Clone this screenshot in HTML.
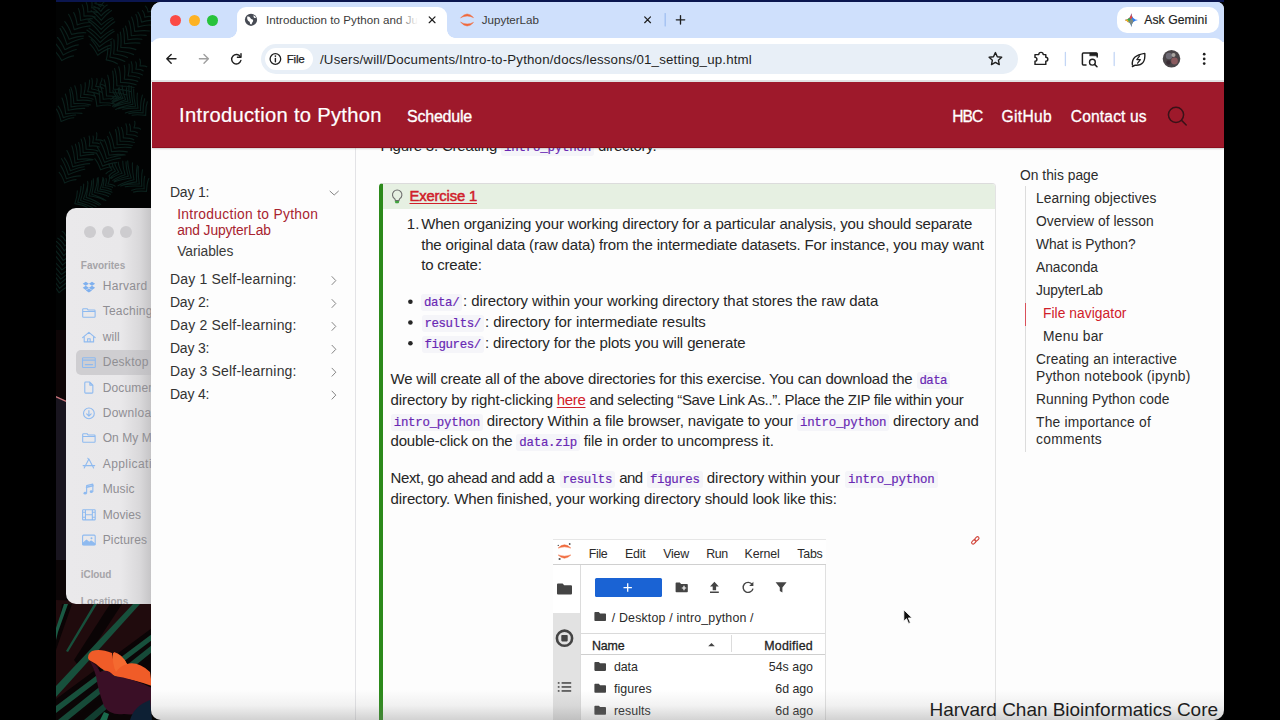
<!DOCTYPE html>
<html lang="en"><head><meta charset="utf-8"><title>Introduction to Python and JupyterLab</title>
<style>
html,body{margin:0;padding:0;}
body{width:1280px;height:720px;position:relative;overflow:hidden;background:#000;font-family:"Liberation Sans",sans-serif;}
.t{position:absolute;white-space:nowrap;}
.a{position:absolute;}
.c{font-family:"Liberation Mono",monospace;font-size:12.4px;color:#6928b4;-webkit-text-stroke:0.2px #6928b4;background:#f5f5f9;padding:1.5px 3px;position:relative;top:-0.9px;border-radius:3px;}
svg{position:absolute;overflow:visible;}

</style></head><body>
<!-- desktop wallpaper -->
<div class="a" id="wall" style="left:56px;top:0;width:1168px;height:720px;background:#020303;overflow:hidden;">
  <svg width="1168" height="720" viewBox="56 0 1168 720" style="left:0;top:0">
    <path d="M61.8 60.6Q57.8 53.6 54.0 50.5M61.8 60.6Q68.6 56.5 73.6 55.9M63.2 55.1Q59.2 47.1 55.2 43.3M63.2 55.1Q70.8 50.6 76.3 49.5M64.9 49.7Q61.3 41.6 57.5 37.5M64.9 49.7Q72.8 45.6 78.3 44.9M66.9 44.4Q63.6 34.2 60.0 28.4M66.9 44.4Q76.4 39.7 83.2 38.3M69.1 39.3Q65.8 30.9 62.0 26.4M69.1 39.3Q77.6 36.2 83.4 36.1M71.5 34.4Q68.5 26.1 64.8 21.7M71.5 34.4Q80.1 32.2 85.8 32.8M74.2 29.6Q71.9 19.9 68.6 14.3M74.2 29.6Q83.8 26.3 90.1 25.9M77.2 24.9Q76.1 16.9 73.7 12.6M77.2 24.9Q85.0 22.4 89.8 22.5M80.5 20.5Q80.3 12.7 78.4 8.5M80.5 20.5Q88.0 18.3 92.5 18.7M84.0 16.1Q84.0 8.8 82.2 4.8M84.0 16.1Q91.2 15.5 95.3 17.0M87.7 11.9Q88.0 5.6 86.3 2.4M87.7 11.9Q94.0 11.1 97.4 12.5M91.7 7.9Q92.6 2.5 91.3 0.0M91.7 7.9Q97.1 7.1 99.6 8.4M96.0 4.0Q96.6 -1.3 95.1 -3.8M96.0 4.0Q101.3 4.0 103.7 5.8M97.7 55.2Q93.8 47.6 90.0 44.1M97.7 55.2Q104.5 50.0 109.5 48.4M98.6 51.0Q94.8 43.3 91.1 39.7M98.6 51.0Q105.7 46.3 110.9 45.1M99.4 46.8Q93.8 39.4 88.8 36.1M99.4 46.8Q106.7 40.9 112.2 38.8M100.1 42.5Q93.0 34.2 86.9 30.1M100.1 42.5Q108.1 34.8 114.2 31.3M100.6 38.2Q94.4 31.2 89.0 28.2M100.6 38.2Q107.6 31.9 113.1 29.5M100.9 33.8Q94.0 25.1 88.1 20.8M100.9 33.8Q108.7 25.7 114.8 21.8M101.2 29.4Q94.3 22.3 88.6 19.2M101.2 29.4Q108.0 22.1 113.5 18.9M101.3 24.9Q96.1 18.5 91.7 16.0M101.3 24.9Q107.3 19.4 112.2 17.7M101.3 20.4Q95.7 13.6 91.1 10.7M101.3 20.4Q106.9 13.5 111.5 10.6M101.2 15.9Q96.9 10.5 93.6 8.9M101.2 15.9Q105.5 10.8 109.2 9.4M100.9 11.3Q96.8 7.0 93.7 6.2M100.9 11.3Q104.3 6.4 107.2 5.1M100.5 6.7Q97.1 3.2 94.6 3.0M100.5 6.7Q102.8 2.2 105.0 1.3M100.0 2.0Q96.7 -1.9 94.3 -2.4M100.0 2.0Q102.5 -2.4 104.8 -3.4M106.2 59.9Q108.2 52.5 107.6 48.0M106.2 59.9Q113.6 61.2 117.4 63.9M109.9 57.1Q111.7 47.6 111.0 41.6M109.9 57.1Q119.3 58.5 124.8 61.4M113.6 54.0Q114.8 45.2 113.8 39.7M113.6 54.0Q122.4 54.9 127.5 57.4M117.2 50.8Q118.6 40.6 117.8 34.0M117.2 50.8Q127.3 51.9 133.6 54.6M120.8 47.4Q121.6 37.9 120.3 32.1M120.8 47.4Q130.2 47.5 135.9 49.6M124.4 43.7Q124.7 34.1 123.1 28.2M124.4 43.7Q133.9 42.3 139.9 43.1M127.9 39.8Q127.5 31.1 125.5 26.0M127.9 39.8Q136.6 38.4 141.9 39.3M131.3 35.7Q131.0 26.4 128.9 20.9M131.3 35.7Q140.5 34.4 146.3 35.4M134.7 31.4Q133.9 22.3 131.6 17.0M134.7 31.4Q143.8 30.0 149.5 31.0M138.1 26.9Q137.8 18.8 135.9 14.5M138.1 26.9Q145.9 24.7 150.6 25.1M141.5 22.1Q140.4 15.4 137.9 12.1M141.5 22.1Q148.1 20.0 151.9 20.5M144.8 17.2Q144.3 12.3 142.4 10.6M144.8 17.2Q149.4 15.8 151.7 16.9M148.0 12.0Q147.3 7.5 145.4 6.1M148.0 12.0Q152.3 10.5 154.4 11.6M61.1 121.5Q59.2 113.3 56.4 109.1M61.1 121.5Q68.8 118.0 73.8 117.7M63.3 117.6Q61.2 110.0 58.1 106.1M63.3 117.6Q70.9 114.9 75.7 115.0M65.7 113.9Q64.5 103.9 62.0 98.0M65.7 113.9Q75.5 112.4 82.0 113.4M68.2 110.3Q67.5 100.2 65.3 94.0M68.2 110.3Q78.2 108.1 84.7 108.4M71.0 106.9Q71.2 96.2 69.6 89.6M71.0 106.9Q81.5 105.2 88.4 106.0M73.9 103.6Q73.2 93.6 70.8 87.4M73.9 103.6Q84.0 103.2 90.4 104.9M77.1 100.4Q76.9 91.3 74.8 85.8M77.1 100.4Q86.3 99.7 91.9 101.0M80.4 97.3Q81.8 89.3 80.8 84.5M80.4 97.3Q88.5 97.4 93.1 99.2M83.9 94.4Q85.8 87.1 85.1 82.7M83.9 94.4Q91.5 94.6 95.5 96.5M87.7 91.6Q89.9 84.4 89.5 80.0M87.7 91.6Q95.2 92.2 99.1 94.2M91.6 89.0Q93.0 82.3 91.8 78.4M91.6 89.0Q98.3 90.0 101.6 92.4M95.7 86.4Q97.6 81.3 96.9 78.6M95.7 86.4Q101.2 86.8 103.3 88.5M100.0 84.0Q102.4 80.1 101.9 78.2M100.0 84.0Q104.3 84.8 105.5 86.8M96.9 106.3Q96.1 97.9 93.6 93.1M96.9 106.3Q105.3 104.6 110.4 105.2M100.0 102.8Q100.0 93.6 98.1 88.1M100.0 102.8Q109.2 102.4 114.8 104.1M103.2 99.3Q102.5 90.3 100.0 84.9M103.2 99.3Q112.4 98.0 118.0 98.9M106.5 95.9Q106.2 85.9 104.1 79.7M106.5 95.9Q116.5 96.3 122.7 98.5M109.9 92.5Q109.7 81.9 107.7 75.2M109.9 92.5Q120.5 92.9 127.2 95.1M113.4 89.1Q114.1 78.2 112.7 71.1M113.4 89.1Q124.3 89.5 131.2 91.7M116.9 85.7Q116.8 75.3 114.6 68.6M116.9 85.7Q127.5 85.7 134.1 87.5M120.5 82.4Q120.7 72.8 118.7 66.8M120.5 82.4Q130.2 82.7 136.1 84.8M124.3 79.1Q125.4 70.6 124.3 65.4M124.3 79.1Q132.8 79.3 137.7 81.4M128.1 75.8Q129.7 68.3 129.0 64.0M128.1 75.8Q135.6 76.1 139.7 78.1M132.0 72.5Q132.7 65.6 131.2 61.7M132.0 72.5Q138.9 72.9 142.5 74.9M135.9 69.2Q137.0 64.3 135.7 61.9M135.9 69.2Q141.1 69.1 143.1 70.8M140.0 66.0Q141.0 61.3 139.7 59.1M140.0 66.0Q144.9 65.5 146.8 66.8M145.7 115.4Q137.1 114.2 132.0 115.2M145.7 115.4Q145.5 106.9 147.3 101.8M143.1 112.9Q134.2 112.2 128.8 113.6M143.1 112.9Q142.9 104.0 144.7 98.7M140.5 110.5Q131.0 110.9 125.3 113.0M140.5 110.5Q140.5 101.0 142.4 95.1M138.0 108.2Q128.5 107.9 122.8 109.3M138.0 108.2Q136.5 98.9 137.4 93.1M135.5 106.2Q124.9 106.7 118.4 108.7M135.5 106.2Q133.3 95.9 133.7 89.1M133.0 104.3Q122.2 106.2 115.7 109.4M133.0 104.3Q130.9 93.6 131.4 86.4M130.5 102.6Q120.0 104.2 113.8 107.0M130.5 102.6Q128.4 92.3 129.0 85.4M128.0 101.1Q119.7 102.7 115.2 105.4M128.0 101.1Q126.0 92.9 126.6 87.7M125.6 99.7Q117.1 102.7 112.5 106.3M125.6 99.7Q122.3 91.2 122.1 85.5M123.1 98.5Q115.8 100.5 112.3 103.2M123.1 98.5Q119.6 91.8 119.2 87.5M120.7 97.5Q114.9 99.8 112.7 102.7M120.7 97.5Q118.0 91.9 118.3 88.2M118.4 96.7Q113.5 98.9 112.0 101.5M118.4 96.7Q115.1 92.2 115.0 89.4M116.0 96.0Q111.7 97.7 110.8 99.7M116.0 96.0Q112.9 92.6 112.9 90.4M64.6 182.9Q62.2 175.7 59.2 172.3M64.6 182.9Q71.5 179.7 76.1 179.6M66.4 178.8Q63.9 170.2 60.7 165.6M66.4 178.8Q74.7 175.8 80.4 175.9M68.3 174.7Q65.3 164.5 61.6 158.7M68.3 174.7Q78.1 170.3 84.8 169.2M70.4 170.8Q67.8 162.4 64.3 157.9M70.4 170.8Q78.7 167.2 84.1 166.7M72.7 166.9Q70.3 156.6 66.9 150.5M72.7 166.9Q82.8 163.8 89.7 163.6M75.0 163.2Q74.1 152.4 71.9 145.9M75.0 163.2Q85.4 160.2 92.3 160.0M77.6 159.5Q77.3 149.9 75.4 144.2M77.6 159.5Q87.0 158.3 93.1 159.6M80.3 156.0Q80.3 147.4 78.6 142.5M80.3 156.0Q88.7 153.9 93.8 154.4M83.1 152.6Q83.0 144.0 81.1 139.1M83.1 152.6Q91.6 151.8 96.8 153.2M86.1 149.3Q86.0 141.7 84.0 137.5M86.1 149.3Q93.7 149.2 98.0 151.1M89.3 146.1Q90.3 139.5 89.1 136.0M89.3 146.1Q95.8 145.5 99.3 147.0M92.6 143.0Q93.9 138.2 93.0 136.1M92.6 143.0Q97.4 142.5 99.4 143.9M96.0 140.0Q97.4 135.0 96.5 132.7M96.0 140.0Q101.2 139.6 103.3 141.0M100.6 169.8Q98.1 162.4 94.9 158.8M100.6 169.8Q107.9 166.7 112.6 166.7M102.5 166.1Q99.6 157.4 96.1 152.8M102.5 166.1Q111.1 162.8 116.8 162.6M104.5 162.4Q101.3 152.8 97.4 147.3M104.5 162.4Q114.1 158.7 120.5 158.1M106.6 158.8Q104.0 148.2 100.3 141.9M106.6 158.8Q117.1 155.4 124.2 154.9M109.0 155.2Q107.2 145.4 104.2 139.6M109.0 155.2Q118.8 153.8 125.3 155.0M111.5 151.6Q110.3 142.0 107.6 136.4M111.5 151.6Q121.1 150.6 127.3 151.9M114.2 148.1Q112.5 138.1 109.4 132.0M114.2 148.1Q124.4 146.7 131.1 147.6M117.1 144.7Q117.2 135.2 115.5 129.5M117.1 144.7Q126.4 144.0 132.3 145.5M120.1 141.3Q119.9 132.4 117.9 127.1M120.1 141.3Q129.0 140.9 134.4 142.5M123.3 137.9Q123.3 131.0 121.4 127.4M123.3 137.9Q130.2 137.8 133.8 139.8M126.7 134.5Q127.4 127.6 125.9 123.8M126.7 134.5Q133.6 134.5 137.3 136.4M130.3 131.2Q130.9 126.3 129.4 124.1M130.3 131.2Q135.3 131.1 137.3 132.8M134.0 128.0Q135.5 123.4 134.6 121.3M134.0 128.0Q138.8 127.6 140.6 129.1M146.5 191.4Q138.4 190.6 133.5 192.1M146.5 191.4Q146.8 183.2 148.8 178.5M144.2 188.8Q136.3 188.5 131.7 190.2M144.2 188.8Q143.5 180.7 144.7 176.2M141.8 186.3Q131.6 185.6 125.2 186.8M141.8 186.3Q141.1 176.1 142.5 169.7M139.3 184.0Q128.7 183.8 122.0 185.4M139.3 184.0Q137.7 173.5 138.4 166.6M136.7 181.9Q126.7 183.2 120.7 186.0M136.7 181.9Q135.9 171.8 137.3 165.3M134.0 179.8Q124.0 182.3 118.0 185.8M134.0 179.8Q131.9 169.6 132.5 162.8M131.2 178.0Q120.6 179.4 114.2 182.0M131.2 178.0Q128.0 167.8 127.7 160.9M128.3 176.3Q119.3 178.2 114.3 181.0M128.3 176.3Q125.7 167.5 126.1 161.7M125.2 174.7Q117.0 177.2 112.8 180.4M125.2 174.7Q122.5 166.7 122.8 161.2M122.1 173.3Q114.9 175.5 111.5 178.3M122.1 173.3Q118.6 166.6 118.3 162.2M118.8 172.1Q112.7 174.9 110.3 178.1M118.8 172.1Q115.1 166.3 114.6 162.5M115.5 171.0Q110.5 173.4 109.0 176.1M115.5 171.0Q112.3 166.3 112.3 163.4M112.0 170.0Q107.2 171.7 106.0 173.8M112.0 170.0Q108.9 166.1 108.9 163.6M74.8 203.6Q77.5 195.9 77.3 190.9M74.8 203.6Q82.9 204.9 87.1 207.3M77.7 202.1Q80.8 192.7 81.0 186.3M77.7 202.1Q87.3 204.5 92.7 207.8M80.5 200.5Q83.6 190.8 83.7 184.1M80.5 200.5Q90.4 203.2 96.0 206.6M83.4 199.0Q87.3 189.3 88.1 182.7M83.4 199.0Q93.4 201.7 99.2 205.2M86.2 197.4Q88.3 187.8 87.6 181.3M86.2 197.4Q95.5 200.5 100.7 204.4M89.0 195.8Q91.8 186.7 91.7 180.7M89.0 195.8Q98.4 197.3 103.8 199.9M91.8 194.2Q93.9 185.0 93.3 178.8M91.8 194.2Q100.8 196.9 105.8 200.5M94.5 192.5Q97.4 183.9 97.3 178.3M94.5 192.5Q103.5 193.9 108.6 196.4M97.3 190.9Q99.0 182.6 98.1 177.3M97.3 190.9Q105.8 191.9 110.5 194.2M100.0 189.2Q102.9 181.8 102.9 177.2M100.0 189.2Q107.8 190.1 112.0 192.2M102.7 187.5Q104.4 181.8 103.5 178.6M102.7 187.5Q108.7 188.0 111.3 189.8M105.3 185.7Q107.0 180.9 106.0 178.5M105.3 185.7Q110.5 185.8 112.5 187.3M108.0 184.0Q110.0 179.2 109.4 176.7M108.0 184.0Q113.1 184.3 115.1 186.1M59.0 292.7Q55.0 286.1 51.4 283.4M59.0 292.7Q64.8 287.7 69.2 286.3M59.5 288.3Q54.6 280.9 50.3 277.6M59.5 288.3Q66.2 282.5 71.3 280.4M60.1 283.7Q55.0 275.5 50.4 271.5M60.1 283.7Q67.2 277.2 72.7 274.5M60.7 279.1Q54.5 271.1 49.0 267.2M60.7 279.1Q68.7 272.7 74.9 270.2M61.3 274.5Q54.6 265.9 48.8 261.6M61.3 274.5Q70.2 268.3 77.1 265.9M61.9 269.9Q56.1 262.5 51.0 259.3M61.9 269.9Q69.4 264.3 75.2 262.5M62.5 265.1Q56.5 256.4 51.2 252.0M62.5 265.1Q70.4 258.2 76.6 255.2M63.1 260.4Q57.6 252.0 52.7 247.9M63.1 260.4Q71.2 254.9 77.5 253.0M63.7 255.6Q58.8 247.9 54.6 244.2M63.7 255.6Q70.3 249.4 75.4 247.0M64.2 250.8Q60.1 244.2 56.4 241.5M64.2 250.8Q69.7 245.2 73.9 243.3M64.8 245.9Q61.2 240.2 57.8 238.2M64.8 245.9Q70.0 241.6 73.9 240.7M65.4 241.0Q63.1 236.7 60.8 235.9M65.4 241.0Q68.8 237.5 71.3 237.4M66.0 236.0Q64.0 231.9 62.1 231.3M66.0 236.0Q69.1 232.8 71.2 232.8" stroke="#0b201c" stroke-width="1.15" fill="none" stroke-linecap="round"/>
    <!-- bottom art -->
    <polygon points="56,330 66,330 66,400 56,396" fill="#0d0506"/>
    <polygon points="56,396.500 66,401 66,600 152,604 152,720 56,720" fill="#19151f"/>
    <polygon points="56,396 66,400.500 66,402 56,397.500" fill="#c9767c"/>
    <polygon points="56,560 66,560 66,600 152,604 152,720 56,720" fill="#0b0506"/>
    <polygon points="56,600 152,604 152,640 120,660 56,712" fill="#200b0d"/>
    <polygon points="56,640 62,604 72,604 56,650" fill="#0a0405"/>
    <polygon points="56,628 64,604 68,604 58,632 56,640" fill="#1a5a44"/>
    <polygon points="66,651 94,604 97,604 68,652" fill="#17503c"/>
    <polygon points="74,660 110,604 122,604 80,668" fill="#0a0405"/>
    <polygon points="56,686 133,604 140,604 56,697" fill="#17503c"/>
    <polygon points="56,699 152,628 152,634 56,706" fill="#0a0405"/>
    <polygon points="56,706 152,634 152,640 56,713" fill="#17503c"/>
    <polygon points="58,720 152,645 152,652 68,720" fill="#164a38"/>
    <polygon points="72,720 152,656 152,660 80,720" fill="#0a0405"/>
    <polygon points="84,720 120,690 126,692 94,720" fill="#123d30"/>
    <path d="M89 660 Q86 655 92 651 Q100 648 112 653 L113 662 Q112 655 114 652 Q122 654 127 664 Q138 661 150 672 L152 686 Q136 680 120 678 Q104 672 96 664 Z" fill="#f05c28"/>
    <path d="M113 653 Q122 654 127 664 Q120 666 116 672 Q112 664 113 653Z" fill="#f46a30"/>
    <path d="M90 661 Q98 666 100 672 Q108 668 114 676 Q132 678 152 688 L152 708 Q140 716 124 714 Q110 716 104 706 Q98 690 96 676 Q94 668 90 661Z" fill="#3a0f26"/>
    <path d="M130 720 Q134 706 150 700 L152 720Z" fill="#0d2034"/>
    <path d="M100 720 L104 712 L109 714 L107 720Z" fill="#1a6a4c"/>
  </svg>
</div>
<div class="a" style="left:56px;top:0;width:1168px;height:1.7px;background:#0b164f;"></div>

<!-- Finder window -->
<div class="a" id="finder" style="left:66px;top:208px;width:120px;height:396px;background:linear-gradient(to right,#eae9eb 0,#e9e8ea 55px,#d9d8da 74px,#c4c3c5 86px);border-radius:10px;overflow:hidden;">
  <div class="a" style="left:17.5px;top:18px;width:12px;height:12px;border-radius:50%;background:#cdcccf;"></div>
  <div class="a" style="left:35.5px;top:18px;width:12px;height:12px;border-radius:50%;background:#cdcccf;"></div>
  <div class="a" style="left:53.5px;top:18px;width:12px;height:12px;border-radius:50%;background:#cdcccf;"></div>
  <div class="a" style="left:9.5px;top:141.5px;width:100px;height:25px;border-radius:5px;background:linear-gradient(to right,#cfced1 0,#cfced1 50px,#bebdc0 78px);"></div>
  <svg width="120" height="396" viewBox="66 208 120 396" style="left:0;top:0" fill="none" stroke="#8ebaf0" stroke-width="1.3" stroke-linejoin="round" stroke-linecap="round">
    <!-- dropbox -->
    <g transform="translate(88.9 287.20000000000005) scale(.84) translate(-88.9 -286.6)">
    <g fill="#7fb0ee" stroke="none"><path d="M85.2 280.2l-3.7 2.4 3.7 2.4 3.7-2.4zM92.6 280.2l-3.7 2.4 3.7 2.4 3.7-2.4zM81.5 287.4l3.7 2.4 3.7-2.4-3.7-2.4zM92.6 285l-3.7 2.4 3.7 2.4 3.7-2.4zM85.2 290.6l3.7 2.4 3.7-2.4-3.7-2.4z"/></g>
    </g>
    <!-- folder teaching -->
    <g transform="translate(88.9 313.0) scale(.84) translate(-88.9 -312.4)">
    <path d="M82.5 307.3h4.2l1.4 1.6h7.2a1 1 0 0 1 1 1v6.6a1 1 0 0 1-1 1h-12.8a1 1 0 0 1-1-1v-8.2a1 1 0 0 1 1-1zM81.6 310.6h14.6"/>
    </g>
    <!-- home -->
    <g transform="translate(88.9 337.20000000000005) scale(.84) translate(-88.9 -336.6)">
    <path d="M81.4 337.2l7.5-6.4 7.5 6.4M83.3 336v6.2h11.2v-6.2M87.4 342.2v-3.8h3v3.8"/>
    </g>
    <!-- desktop -->
    <g transform="translate(88.9 362.6) scale(.84) translate(-88.9 -362)">
    <path d="M82.3 356.2h13.2a1 1 0 0 1 1 1v9.6a1 1 0 0 1-1 1h-13.2a1 1 0 0 1-1-1v-9.6a1 1 0 0 1 1-1zM81.4 359h15M84.6 364.4h8.6"/>
    </g>
    <!-- document -->
    <g transform="translate(88.9 387.6) scale(.84) translate(-88.9 -387)">
    <path d="M85 380.4h5l3.6 3.6v8.6a1 1 0 0 1-1 1h-7.6a1 1 0 0 1-1-1v-11.2a1 1 0 0 1 1-1zM90 380.6v3.4h3.4"/>
    </g>
    <!-- downloads -->
    <g transform="translate(88.9 413.40000000000003) scale(.84) translate(-88.9 -412.8)">
    <circle cx="88.9" cy="412.8" r="6.4"/><path d="M88.9 409.4v6.4M86.2 413.4l2.7 2.6 2.7-2.6"/>
    </g>
    <!-- folder on my mac -->
    <g transform="translate(88.9 438.0) scale(.84) translate(-88.9 -437.4)">
    <path d="M82.5 432.3h4.2l1.4 1.6h7.2a1 1 0 0 1 1 1v6.6a1 1 0 0 1-1 1h-12.8a1 1 0 0 1-1-1v-8.2a1 1 0 0 1 1-1zM81.6 435.6h14.6"/>
    </g>
    <!-- applications -->
    <g transform="translate(88.9 463.6) scale(.84) translate(-88.9 -463)">
    <path d="M88.9 457.6l-5.6 10.6M88.9 457.6l5.6 10.6M82 465.4h13.8M87.6 456.6l1.3 1.6"/>
    </g>
    <!-- music -->
    <g transform="translate(88.9 488.8) scale(.84) translate(-88.9 -488.2)">
    <g><path d="M86.2 493.2v-8.8l7.4-1.8v8.8" /><ellipse cx="84.4" cy="493.4" rx="1.9" ry="1.6" fill="#8ebaf0" stroke="none"/><ellipse cx="91.8" cy="491.6" rx="1.9" ry="1.6" fill="#8ebaf0" stroke="none"/><path d="M86.2 486.4l7.4-1.8" stroke-width="2"/></g>
    </g>
    <!-- movies -->
    <g transform="translate(88.9 514.8000000000001) scale(.84) translate(-88.9 -514.2)">
    <path d="M82.2 508.2h13.4a.8.8 0 0 1 .8.8v10.4a.8.8 0 0 1-.8.8h-13.4a.8.8 0 0 1-.8-.8v-10.4a.8.8 0 0 1 .8-.8zM84.8 508.2v12M93 508.2v12M84.8 514.2h8.2M81.4 511.2h3.4M81.4 517.2h3.4M93 511.2h3.4M93 517.2h3.4"/>
    </g>
    <!-- pictures -->
    <g transform="translate(88.9 540.0) scale(.84) translate(-88.9 -539.4)">
    <g><rect x="81.4" y="533.6" width="15" height="11.6" rx="1.2"/><path d="M81.6 543.6l4.4-4 3.2 2.8 2.4-1.8 4.6 3.6v.8h-14.6z" fill="#8ebaf0"/><circle cx="92" cy="537.4" r="1.2" fill="#8ebaf0" stroke="none"/></g>
    </g>
  </svg>
<div class="t" style="top:51.01px;font-size:10px;line-height:14px;color:#a5a4a8;left:14.80px;font-weight:700;letter-spacing:-0.008px;">Favorites</div>
<div class="t" style="top:70.01px;font-size:12px;line-height:17px;color:#8f8e93;left:36.70px;letter-spacing:0.312px;">Harvard U</div>
<div class="t" style="top:95.02px;font-size:12px;line-height:17px;color:#8f8e93;left:36.70px;letter-spacing:0.244px;">Teaching</div>
<div class="t" style="top:121.01px;font-size:12px;line-height:17px;color:#8f8e93;left:36.70px;letter-spacing:0.082px;">will</div>
<div class="t" style="top:146.00px;font-size:12px;line-height:17px;color:#8f8e93;left:36.70px;letter-spacing:0.281px;">Desktop</div>
<div class="t" style="top:172.01px;font-size:12px;line-height:17px;color:#8f8e93;left:36.70px;letter-spacing:0.144px;">Documents</div>
<div class="t" style="top:197.01px;font-size:12px;line-height:17px;color:#8f8e93;left:36.70px;letter-spacing:0.292px;">Downloads</div>
<div class="t" style="top:222.02px;font-size:12px;line-height:17px;color:#8f8e93;left:36.70px;letter-spacing:0.073px;">On My Mac</div>
<div class="t" style="top:248.01px;font-size:12px;line-height:17px;color:#8f8e93;left:36.70px;letter-spacing:0.440px;">Applications</div>
<div class="t" style="top:273.00px;font-size:12px;line-height:17px;color:#8f8e93;left:36.70px;letter-spacing:0.131px;">Music</div>
<div class="t" style="top:299.01px;font-size:12px;line-height:17px;color:#8f8e93;left:36.70px;letter-spacing:0.081px;">Movies</div>
<div class="t" style="top:324.01px;font-size:12px;line-height:17px;color:#8f8e93;left:36.70px;letter-spacing:0.143px;">Pictures</div>
<div class="t" style="top:360.00px;font-size:10px;line-height:14px;color:#a5a4a8;left:14.80px;font-weight:700;letter-spacing:-0.085px;">iCloud</div>
<div class="t" style="top:387.00px;font-size:10px;line-height:14px;color:#a5a4a8;left:14.80px;font-weight:700;letter-spacing:0.030px;">Locations</div>
</div>

<!-- Chrome window -->
<div class="a" id="chrome" style="left:151px;top:2px;width:1073px;height:718px;background:#fdfdfd;border-radius:10px 7px 10px 10px;overflow:hidden;">
  <!-- tab strip -->
  <div class="a" style="left:0;top:0;width:1073px;height:40px;background:#cfe0fc;"></div>
  <!-- toolbar -->
  <div class="a" style="left:0;top:36px;width:1073px;height:43px;background:#fff;border-radius:9px 9px 0 0;"></div>
  <!-- active tab -->
  <div class="a" style="left:85.5px;top:5px;width:210px;height:34px;background:#fff;border-radius:9px 9px 0 0;"></div>
  <div class="a" style="left:77.5px;top:28px;width:8px;height:8px;background:radial-gradient(circle at 0 0, rgba(255,255,255,0) 7.5px, #fff 8px);"></div>
  <div class="a" style="left:295.5px;top:28px;width:8px;height:8px;background:radial-gradient(circle at 100% 0, rgba(255,255,255,0) 7.5px, #fff 8px);"></div>
  <!-- traffic lights -->
  <div class="a" style="left:19.4px;top:12.9px;width:11px;height:11px;border-radius:50%;background:#fb4a45;"></div>
  <div class="a" style="left:37.5px;top:12.9px;width:11px;height:11px;border-radius:50%;background:#fdb224;"></div>
  <div class="a" style="left:55.6px;top:12.9px;width:11px;height:11px;border-radius:50%;background:#27c33b;"></div>
  <!-- omnibox -->
  <div class="a" style="left:109.5px;top:42px;width:757px;height:30px;border-radius:15px;background:#e8eff7;"></div>
  <div class="a" style="left:113.5px;top:46.3px;width:48px;height:21.5px;border-radius:11px;background:#fff;"></div>
  <!-- gemini pill -->
  <div class="a" style="left:966px;top:5.2px;width:101.5px;height:25.6px;border-radius:10px;background:#fff;"></div>
  <!-- chrome icons -->
  <svg width="1073" height="80" viewBox="151 2 1073 80" style="left:0;top:0" fill="none" stroke="#1f1f1f" stroke-width="1.5" stroke-linecap="round" stroke-linejoin="round">
    <!-- globe -->
    <circle cx="251" cy="19.8" r="6.1" fill="#474b54" stroke="none"/>
    <path d="M247.2 16.6q2.2-.4 3 1.2q.6 1.6 2.4 1.8q1.2 1.2-.2 2.6l-1 2.4q-1.8-.6-1.6-2.6q-2.2-1-2.6-3zM253.6 15.2q1.6.8 2.6 2.6l-1.8.2q-1.200-.6-.8-2.800z" fill="#fff" stroke="none"/>
    <!-- tab close -->
    <path d="M644.700 16.900l5.800 5.800M650.500 16.900l-5.800 5.800" stroke="#1f1f1f" stroke-width="1.25"/>
    <!-- jupyter icon -->
    <path d="M460.900 17.600q6.200-7.400 12.600 0q-6.300-3.200-12.600 0zM460.900 22.400q6.200 7.400 12.600 0q-6.300 3.200-12.600 0z" fill="#f0683a" stroke="#f0683a" stroke-width=".5"/>
    <!-- tab separator & plus -->
    <path d="M665.200 13.500v12.500" stroke="#9dbdf0" stroke-width="1.2"/>
    <path d="M676.300 19.800h8.400M680.500 15.600v8.400" stroke-width="1.35"/>
    <!-- back / forward / reload -->
    <path d="M176 58.800h-9M171.200 54.400l-4.400 4.400 4.400 4.400" stroke-width="1.400"/>
    <path d="M199.400 58.800h9M204 54.400l4.400 4.400-4.400 4.400" stroke="#a0a0a0" stroke-width="1.400"/>
    <path d="M240.400 56.800a4.700 4.700 0 1 0 .5 3.600" stroke-width="1.400"/><path d="M241 53.600v3.600h-3.600" stroke-width="1.400"/>
    <!-- info icon -->
    <circle cx="275.400" cy="59" r="5.300" stroke-width="1.300"/><path d="M275.400 58.400v3.400" stroke-width="1.400"/><circle cx="275.400" cy="56.100" r=".85" fill="#1f1f1f" stroke="none"/>
    <!-- star -->
    <path d="M995.400 52.600l1.900 4.100 4.400.5-3.300 3 .9 4.400-3.900-2.200-3.900 2.200.9-4.400-3.300-3 4.400-.5z" stroke-width="1.400"/>
    <!-- extensions puzzle -->
    <path d="M1035 54.600h3.800a2.200 2.200 0 0 1 4.400 0h2.600v2.600a2 2 0 0 1 0 4v3.200h-10.800v-3.200a1.900 1.900 0 0 0 0-3.800z" stroke-width="1.450"/>
    <path d="M1065.400 52.500v13M1114.200 52.500v13" stroke="#c3d6f5" stroke-width="1.300"/>
    <!-- tab search -->
    <path d="M1086 65h-2.600a1 1 0 0 1-1-1v-10a1 1 0 0 1 1-1h12.800a1 1 0 0 1 1 1v3" stroke-width="1.500"/><path d="M1090 53h7v2.800h-7z" fill="#1f1f1f" stroke-width=".6"/>
    <circle cx="1092.400" cy="62.200" r="2.900" stroke-width="1.400"/><path d="M1094.600 64.400l2.400 2.400" stroke-width="1.500"/>
    <!-- leaf -->
    <path d="M1132.400 64.800q-1.200-9.400 12.400-11.400q1 12.600-9.600 11.800q-1.400.2-2.800 1.400" stroke-width="1.400"/><path d="M1139.600 55.800l-2.800 3.800h3.600l-2.800 3.600" stroke-width="1.200"/>
    <!-- avatar -->
    <circle cx="1171.500" cy="58.700" r="8.800" fill="#4a4548" stroke="none"/>
    <circle cx="1169" cy="56" r="3.200" fill="#6d6a74" stroke="none"/><circle cx="1174.500" cy="61" r="3.400" fill="#8a5a5e" stroke="none"/><circle cx="1173.500" cy="55" r="2" fill="#a9a5a0" stroke="none"/><circle cx="1168.500" cy="62.500" r="2.200" fill="#3a2c34" stroke="none"/>
    <!-- dots -->
    <g fill="#1f1f1f" stroke="none"><circle cx="1204.200" cy="54.200" r="1.350"/><circle cx="1204.200" cy="58.900" r="1.350"/><circle cx="1204.200" cy="63.600" r="1.350"/></g>
    <!-- gemini spark -->
    <path d="M1131.300 13.200q.7 6.200 6.700 6.900q-6 .7-6.700 6.900q-.7-6.200-6.700-6.900q6-.7 6.700-6.900z" fill="#2f7df2" stroke="none"/>
    <path d="M1131.300 13.200q.2 2.600 1.300 4.300l-4.600 4.800q-1.400-1.700-3.400-2.200q6-.7 6.700-6.900z" fill="#e2463f" stroke="none"/>
    <path d="M1124.600 20.100q2 .5 3.400 2.200l1.800-1.900l-2-1.500q-1.400.9-3.200 1.200z" fill="#e9b820" stroke="none"/>
    <path d="M1128 22.300l3.900-4.100l1.600 3.200q-1.800 2-2.200 5.600q-.5-4.300-3.300-4.700z" fill="#7e8a80" stroke="none"/>
    <path d="M1127.200 19.300l2.200-1.400l1.400 1.600l-1.800 1.900z" fill="#36a852" stroke="none"/>
  </svg>
<div class="t" style="top:10.01px;font-size:11.6px;line-height:16px;color:#3a3a3a;left:115.00px;letter-spacing:0.040px;">Introduction to Python and Ju</div>
<div class="t" style="top:10.01px;font-size:11.6px;line-height:16px;color:#3a3a3a;left:330.80px;letter-spacing:-0.037px;">JupyterLab</div>
<div class="t" style="top:49.00px;font-size:11.6px;line-height:16px;color:#1f1f1f;left:135.80px;letter-spacing:-0.272px;-webkit-text-stroke:0.25px #1f1f1f;">File</div>
<div class="t" style="top:48.02px;font-size:13.3px;line-height:19px;color:#1f1f1f;left:169.00px;letter-spacing:0.177px;">/Users/will/Documents/Intro-to-Python/docs/lessons/01_setting_up.html</div>
<div class="t" style="top:10.00px;font-size:12.2px;line-height:17px;color:#1f1f1f;left:993.20px;letter-spacing:0.069px;-webkit-text-stroke:0.2px #1f1f1f;">Ask Gemini</div>
  <!-- tab title fade -->
  <div class="a" style="left:246px;top:10px;width:26px;height:20px;background:linear-gradient(to right,rgba(255,255,255,0),#fff 80%);"></div>
  <svg width="20" height="20" viewBox="422 10 20 20" style="left:271px;top:8px" fill="none"><path d="M429.200 16.900l5.800 5.800M435 16.900l-5.800 5.800" stroke="#1f1f1f" stroke-width="1.25" stroke-linecap="round"/></svg>
  <!-- separator under toolbar -->
  <div class="a" style="left:0;top:78.200px;width:1073px;height:1.6px;background:#e2e2e2;"></div>
  <!-- page vertical lines -->
  <div class="a" style="left:204px;top:146px;width:1px;height:580px;background:#e3e3e6;"></div>
  <!-- callout -->
  <div class="a" style="left:227.800px;top:181px;width:617px;height:560px;border:1px solid #e3e3e3;border-top:0.5px solid #dcdcdc;border-left:4.400px solid #2c8a1b;border-radius:4px;box-sizing:border-box;background:#fdfdfd;overflow:hidden;">
     <div class="a" style="left:0;top:0;width:616px;height:24.8px;background:#e6f0e2;"></div>
  </div>
  <!-- page svg icons -->
  <svg width="1073" height="719" viewBox="151 2 1073 719" style="left:0;top:0" fill="none" stroke-linecap="round" stroke-linejoin="round">
    <!-- sidebar chevrons -->
    <g stroke="#858585" stroke-width="1">
      <path d="M330 191.200l4.200 3.800 4.200-3.800"/>
      <path d="M332 276.600l3.800 4-3.800 4"/>
      <path d="M332 299.500l3.800 4-3.800 4"/>
      <path d="M332 322.400l3.800 4-3.800 4"/>
      <path d="M332 345.300l3.800 4-3.800 4"/>
      <path d="M332 368.200l3.800 4-3.800 4"/>
      <path d="M332 391.100l3.800 4-3.800 4"/>
    </g>
    <!-- bulb -->
    <g stroke="#6e6e6e" stroke-width="1.100"><path d="M394.600 198.600a4.700 4.700 0 1 1 5.200 0q-.6.800-.8 2h-3.600q-.2-1.200-.8-2z"/></g><path d="M395.600 201.400h3.200l-.4 1.400h-2.400z" fill="#2c9a2a" stroke="#2c9a2a" stroke-width=".8"/>
    <!-- bullets -->
    <g fill="#262626" stroke="none"><circle cx="410.400" cy="301.700" r="2.300"/><circle cx="410.400" cy="322.500" r="2.300"/><circle cx="410.400" cy="343.200" r="2.300"/></g>
    <!-- link icon -->
    <g stroke="#d1453b" stroke-width="1.100"><rect x="971.300" y="540.400" width="5" height="3" rx="1.500" transform="rotate(-45 973.800 541.900)"/><rect x="974.300" y="537.400" width="5" height="3" rx="1.500" transform="rotate(-45 976.800 538.900)"/></g>
    <!-- search icon in header placed later -->
  </svg>
<div class="t" style="top:180.01px;font-size:14px;line-height:20px;color:#333;left:18.90px;letter-spacing:-0.178px;">Day 1:</div>
<div class="t" style="top:203.01px;font-size:13.8px;line-height:19px;color:#a8232f;left:26.20px;letter-spacing:0.312px;">Introduction to Python</div>
<div class="t" style="top:219.00px;font-size:13.8px;line-height:19px;color:#a8232f;left:26.20px;letter-spacing:-0.109px;">and JupyterLab</div>
<div class="t" style="top:240.01px;font-size:13.8px;line-height:19px;color:#3a3a3a;left:26.20px;letter-spacing:-0.044px;">Variables</div>
<div class="t" style="top:267.01px;font-size:14px;line-height:20px;color:#333;left:18.90px;letter-spacing:0.192px;">Day 1 Self-learning:</div>
<div class="t" style="top:290.00px;font-size:14px;line-height:20px;color:#333;left:18.90px;letter-spacing:-0.178px;">Day 2:</div>
<div class="t" style="top:313.01px;font-size:14px;line-height:20px;color:#333;left:18.90px;letter-spacing:0.192px;">Day 2 Self-learning:</div>
<div class="t" style="top:336.00px;font-size:14px;line-height:20px;color:#333;left:18.90px;letter-spacing:-0.178px;">Day 3:</div>
<div class="t" style="top:359.01px;font-size:14px;line-height:20px;color:#333;left:18.90px;letter-spacing:0.192px;">Day 3 Self-learning:</div>
<div class="t" style="top:382.01px;font-size:14px;line-height:20px;color:#333;left:18.90px;letter-spacing:-0.178px;">Day 4:</div>
<div class="t" style="top:133.01px;font-size:15px;line-height:21px;color:#262626;left:229.50px;letter-spacing:-0.196px;">Figure 3. Creating <span class="c">intro_python</span> directory.</div>
<div class="t" style="top:184.01px;font-size:14.8px;line-height:21px;color:#d0202a;left:258.50px;letter-spacing:-0.159px;-webkit-text-stroke:0.5px #d0202a;text-decoration:underline;text-decoration-thickness:1.4px;text-underline-offset:2.2px;">Exercise 1</div>
<div class="t" style="top:211.01px;font-size:15px;line-height:21px;color:#262626;left:255.80px;">1.</div>
<div class="t" style="top:211.01px;font-size:15px;line-height:21px;color:#262626;left:270.20px;letter-spacing:-0.168px;">When organizing your working directory for a particular analysis, you should separate</div>
<div class="t" style="top:232.01px;font-size:15px;line-height:21px;color:#262626;left:270.20px;letter-spacing:-0.166px;">the original data (raw data) from the intermediate datasets. For instance, you may want</div>
<div class="t" style="top:252.01px;font-size:15px;line-height:21px;color:#262626;left:270.20px;letter-spacing:-0.205px;">to create:</div>
<div class="t" style="top:288.01px;font-size:15px;line-height:21px;color:#262626;left:269.90px;letter-spacing:-0.377px;"><span class="c">data/</span></div>
<div class="t" style="top:288.01px;font-size:15px;line-height:21px;color:#262626;left:312.00px;letter-spacing:-0.075px;">: directory within your working directory that stores the raw data</div>
<div class="t" style="top:309.01px;font-size:15px;line-height:21px;color:#262626;left:270.50px;letter-spacing:-0.406px;"><span class="c">results/</span></div>
<div class="t" style="top:309.01px;font-size:15px;line-height:21px;color:#262626;left:334.00px;letter-spacing:-0.051px;">: directory for intermediate results</div>
<div class="t" style="top:330.01px;font-size:15px;line-height:21px;color:#262626;left:270.50px;letter-spacing:-0.406px;"><span class="c">figures/</span></div>
<div class="t" style="top:330.01px;font-size:15px;line-height:21px;color:#262626;left:334.00px;letter-spacing:-0.108px;">: directory for the plots you will generate</div>
<div class="t" style="top:366.01px;font-size:15px;line-height:21px;color:#262626;left:239.50px;letter-spacing:-0.177px;">We will create all of the above directories for this exercise. You can download the</div>
<div class="t" style="top:366.01px;font-size:15px;line-height:21px;color:#262626;left:765.50px;letter-spacing:-0.562px;"><span class="c">data</span></div>
<div class="t" style="top:387.01px;font-size:15px;line-height:21px;color:#262626;left:239.50px;letter-spacing:-0.095px;">directory by right-clicking</div>
<div class="t" style="top:387.01px;font-size:15px;line-height:21px;color:#d0202a;left:405.75px;letter-spacing:-0.320px;"><span style="text-decoration:underline;text-decoration-thickness:1px;text-underline-offset:2px;">here</span></div>
<div class="t" style="top:387.01px;font-size:15px;line-height:21px;color:#262626;left:438.50px;letter-spacing:-0.341px;">and selecting “Save Link As..”. Place the ZIP file within your</div>
<div class="t" style="top:408.01px;font-size:15px;line-height:21px;color:#262626;left:239.75px;letter-spacing:-0.249px;"><span class="c">intro_python</span></div>
<div class="t" style="top:408.01px;font-size:15px;line-height:21px;color:#262626;left:335.75px;letter-spacing:-0.097px;">directory Within a file browser, navigate to your</div>
<div class="t" style="top:408.01px;font-size:15px;line-height:21px;color:#262626;left:646.00px;letter-spacing:-0.249px;"><span class="c">intro_python</span></div>
<div class="t" style="top:408.01px;font-size:15px;line-height:21px;color:#262626;left:742.00px;letter-spacing:-0.075px;">directory and</div>
<div class="t" style="top:428.01px;font-size:15px;line-height:21px;color:#262626;left:239.50px;letter-spacing:-0.162px;">double-click on the</div>
<div class="t" style="top:428.01px;font-size:15px;line-height:21px;color:#262626;left:365.25px;letter-spacing:-0.219px;"><span class="c">data.zip</span></div>
<div class="t" style="top:428.01px;font-size:15px;line-height:21px;color:#262626;left:432.75px;letter-spacing:-0.084px;">file in order to uncompress it.</div>
<div class="t" style="top:465.01px;font-size:15px;line-height:21px;color:#262626;left:239.50px;letter-spacing:-0.360px;">Next, go ahead and add a</div>
<div class="t" style="top:465.01px;font-size:15px;line-height:21px;color:#262626;left:408.50px;letter-spacing:-0.366px;"><span class="c">results</span></div>
<div class="t" style="top:465.01px;font-size:15px;line-height:21px;color:#262626;left:468.25px;letter-spacing:-0.594px;">and</div>
<div class="t" style="top:465.01px;font-size:15px;line-height:21px;color:#262626;left:496.00px;letter-spacing:-0.366px;"><span class="c">figures</span></div>
<div class="t" style="top:465.01px;font-size:15px;line-height:21px;color:#262626;left:555.75px;letter-spacing:-0.007px;">directory within your</div>
<div class="t" style="top:465.01px;font-size:15px;line-height:21px;color:#262626;left:694.00px;letter-spacing:-0.228px;"><span class="c">intro_python</span></div>
<div class="t" style="top:486.01px;font-size:15px;line-height:21px;color:#262626;left:239.50px;letter-spacing:-0.098px;">directory. When finished, your working directory should look like this:</div>
<div class="t" style="top:164.00px;font-size:13.8px;line-height:19px;color:#2b2b2b;left:869.00px;letter-spacing:0.022px;">On this page</div>
<div class="t" style="top:187.01px;font-size:13.8px;line-height:19px;color:#2b2b2b;left:885.00px;letter-spacing:0.085px;">Learning objectives</div>
<div class="t" style="top:210.01px;font-size:13.8px;line-height:19px;color:#2b2b2b;left:885.00px;letter-spacing:0.063px;">Overview of lesson</div>
<div class="t" style="top:233.00px;font-size:13.8px;line-height:19px;color:#2b2b2b;left:885.00px;letter-spacing:-0.058px;">What is Python?</div>
<div class="t" style="top:256.00px;font-size:13.8px;line-height:19px;color:#2b2b2b;left:885.00px;letter-spacing:-0.018px;">Anaconda</div>
<div class="t" style="top:279.00px;font-size:13.8px;line-height:19px;color:#2b2b2b;left:885.00px;letter-spacing:-0.157px;">JupyterLab</div>
<div class="t" style="top:302.00px;font-size:13.8px;line-height:19px;color:#d0202a;left:892.00px;letter-spacing:0.048px;">File navigator</div>
<div class="t" style="top:325.00px;font-size:13.8px;line-height:19px;color:#2b2b2b;left:892.00px;letter-spacing:0.275px;">Menu bar</div>
<div class="t" style="top:348.00px;font-size:13.8px;line-height:19px;color:#2b2b2b;left:885.00px;letter-spacing:0.128px;">Creating an interactive</div>
<div class="t" style="top:365.00px;font-size:13.8px;line-height:19px;color:#2b2b2b;left:885.00px;letter-spacing:0.214px;">Python notebook (ipynb)</div>
<div class="t" style="top:388.00px;font-size:13.8px;line-height:19px;color:#2b2b2b;left:885.00px;letter-spacing:0.082px;">Running Python code</div>
<div class="t" style="top:411.00px;font-size:13.8px;line-height:19px;color:#2b2b2b;left:885.00px;letter-spacing:0.223px;">The importance of</div>
<div class="t" style="top:428.00px;font-size:13.8px;line-height:19px;color:#2b2b2b;left:885.00px;letter-spacing:0.295px;">comments</div>
  <!-- JupyterLab figure -->
  <div class="a" id="jl" style="left:402px;top:537px;width:273px;height:190px;background:#fff;overflow:hidden;">
    <div class="a" style="left:0;top:0;width:273px;height:1px;background:#e6e6e6;"></div>
    <div class="a" style="left:0;top:25px;width:273px;height:1.300px;background:#d0d0d0;"></div>
    <div class="a" style="left:0;top:74px;width:27px;height:120px;background:#e2e2e2;"></div>
    <div class="a" style="left:27px;top:26px;width:1px;height:170px;background:#dcdcdc;"></div>
    <div class="a" style="left:272px;top:26px;width:1px;height:170px;background:#e0e0e0;"></div>
    <div class="a" style="left:42px;top:39px;width:66.500px;height:19px;background:#1a63d4;border-radius:1.500px;"></div>
    <div class="a" style="left:28px;top:93.500px;width:244px;height:1px;background:#dadada;"></div>
    <div class="a" style="left:28px;top:114.500px;width:244px;height:1px;background:#cfcfcf;"></div>
    <div class="a" style="left:177.500px;top:96px;width:1px;height:17px;background:#dcdcdc;"></div>
    <svg width="273" height="190" viewBox="553 539 273 190" style="left:0;top:0" fill="#444" stroke="none">
      <!-- jupyter logo -->
      <path d="M558.200 548q6.200-6.400 12.600 0q-6.300-2.400-12.600 0zM558.200 555q6.200 6.400 12.600 0q-6.300 2.400-12.600 0z" fill="#f0683a" stroke="#f0683a" stroke-width=".5"/>
      <circle cx="569.700" cy="544" r=".9" fill="#555"/><circle cx="558.300" cy="545.400" r=".7" fill="#555"/><circle cx="559.600" cy="559" r="1.100" fill="#555"/>
      <!-- sidebar folder -->
      <path d="M557 584.500a1 1 0 0 1 1-1h4.600l1.600 1.700h6.800a1 1 0 0 1 1 1v7.400a1 1 0 0 1-1 1h-13a1 1 0 0 1-1-1z"/>
      <!-- running icon -->
      <circle cx="564.500" cy="638.200" r="7.600" fill="none" stroke="#444" stroke-width="2.600"/><rect x="561.300" y="635" width="6.400" height="6.400" rx=".8"/>
      <!-- list icon -->
      <g><rect x="561.600" y="682.200" width="9.600" height="1.500"/><rect x="561.600" y="686.200" width="9.600" height="1.500"/><rect x="561.600" y="690.200" width="9.600" height="1.500"/><rect x="557.800" y="682.200" width="1.700" height="1.500"/><rect x="557.800" y="686.200" width="1.700" height="1.500"/><rect x="557.800" y="690.200" width="1.700" height="1.500"/></g>
      <!-- plus -->
      <path d="M623.500 586.900h8.400v1.300h-8.400zM627.050 583.350h1.300v8.400h-1.300z" fill="#fff"/>
      <!-- new folder -->
      <path d="M675.600 583.300a.8.800 0 0 1 .8-.8h3.400l1.300 1.400h5.900a.8.800 0 0 1 .8.800v6.800a.8.800 0 0 1-.8.800h-10.600a.8.800 0 0 1-.8-.8z"/><path d="M681.800 587.400h4.400v1.200h-4.400zM683.400 585.800h1.200v4.400h-1.200z" fill="#fff"/>
      <!-- upload -->
      <path d="M714.400 581.800l4.400 4.600h-2.700v3.800h-3.400v-3.800h-2.700zM710 591.600h8.800v1.500h-8.800z"/>
      <!-- refresh -->
      <path d="M752.200 584.400a5 5 0 1 0 .8 4.200" fill="none" stroke="#444" stroke-width="1.400"/><path d="M753.400 581.800v4.200h-4.200z"/>
      <!-- filter -->
      <path d="M775.600 582.200h11l-4.200 5.400v5l-2.600-1.600v-3.400z"/>
      <!-- breadcrumb folder -->
      <path d="M594.400 612.800a.8.800 0 0 1 .8-.8h3.600l1.300 1.400h5.100a.8.800 0 0 1 .8.800v6a.8.800 0 0 1-.8.800h-10a.8.800 0 0 1-.8-.8z"/>
      <!-- sort caret -->
      <path d="M708.200 646.300l3.300-3.300 3.300 3.300z"/>
      <!-- row folders -->
      <path d="M594.400 662.700a.8.800 0 0 1 .8-.8h3.600l1.300 1.400h5.100a.8.800 0 0 1 .8.800v6a.8.800 0 0 1-.8.800h-10a.8.800 0 0 1-.8-.8z"/>
      <path d="M594.400 684.600a.8.800 0 0 1 .8-.8h3.600l1.300 1.400h5.100a.8.800 0 0 1 .8.800v6a.8.800 0 0 1-.8.800h-10a.8.800 0 0 1-.8-.8z"/>
      <path d="M594.400 706.500a.8.800 0 0 1 .8-.8h3.600l1.300 1.400h5.100a.8.800 0 0 1 .8.800v6a.8.800 0 0 1-.8.800h-10a.8.800 0 0 1-.8-.8z"/>
    </svg>
<div class="t" style="top:7.01px;font-size:12.4px;line-height:17px;color:#2a2a2a;left:35.80px;letter-spacing:-0.367px;">File</div>
<div class="t" style="top:7.01px;font-size:12.4px;line-height:17px;color:#2a2a2a;left:72.00px;letter-spacing:-0.215px;">Edit</div>
<div class="t" style="top:7.01px;font-size:12.4px;line-height:17px;color:#2a2a2a;left:110.20px;letter-spacing:-0.210px;">View</div>
<div class="t" style="top:7.01px;font-size:12.4px;line-height:17px;color:#2a2a2a;left:153.20px;letter-spacing:-0.445px;">Run</div>
<div class="t" style="top:7.01px;font-size:12.4px;line-height:17px;color:#2a2a2a;left:191.50px;letter-spacing:-0.121px;">Kernel</div>
<div class="t" style="top:7.01px;font-size:12.4px;line-height:17px;color:#2a2a2a;left:244.30px;letter-spacing:-0.218px;">Tabs</div>
<div class="t" style="top:71.01px;font-size:12.4px;line-height:17px;color:#2a2a2a;left:58.80px;letter-spacing:0.160px;">/ Desktop / intro_python /</div>
<div class="t" style="top:99.02px;font-size:12.4px;line-height:17px;color:#1f1f1f;left:39.00px;letter-spacing:-0.166px;-webkit-text-stroke:0.3px #1f1f1f;">Name</div>
<div class="t" style="top:99.02px;font-size:12.4px;line-height:17px;color:#1f1f1f;left:211.30px;letter-spacing:0.232px;-webkit-text-stroke:0.3px #1f1f1f;">Modified</div>
<div class="t" style="top:120.01px;font-size:12.4px;line-height:17px;color:#2a2a2a;left:60.90px;letter-spacing:-0.031px;">data</div>
<div class="t" style="top:142.00px;font-size:12.4px;line-height:17px;color:#2a2a2a;left:60.90px;letter-spacing:0.114px;">figures</div>
<div class="t" style="top:164.01px;font-size:12.4px;line-height:17px;color:#2a2a2a;left:60.90px;letter-spacing:0.071px;">results</div>
<div class="t" style="top:120.01px;font-size:12.4px;line-height:17px;color:#2a2a2a;left:215.80px;letter-spacing:0.015px;">54s ago</div>
<div class="t" style="top:142.00px;font-size:12.4px;line-height:17px;color:#2a2a2a;left:222.30px;letter-spacing:-0.034px;">6d ago</div>
<div class="t" style="top:164.01px;font-size:12.4px;line-height:17px;color:#2a2a2a;left:222.30px;letter-spacing:-0.034px;">6d ago</div>
  </div>
  <!-- toc border -->
  <div class="a" style="left:874px;top:184px;width:1.300px;height:266px;background:#dcdcdc;"></div>
  <div class="a" style="left:874px;top:300.500px;width:1.300px;height:23px;background:#d9505a;"></div>
  <!-- page header -->
  <div class="a" style="left:1px;top:79.600px;width:1072px;height:65.4px;background:#9e192b;border-bottom:1.2px solid #8c0f1e;box-shadow:0 1px 1.5px rgba(0,0,0,0.18);"></div>
  <svg width="30" height="30" viewBox="1162 101 30 30" style="left:1011px;top:99px" fill="none" stroke="#3a1218" stroke-width="1.500" stroke-linecap="round"><circle cx="1176" cy="114.800" r="7.600"/><path d="M1181.600 120.400l4.600 4.600"/></svg>
<div class="t" style="top:99.01px;font-size:20.2px;line-height:28px;color:#fff;left:28.10px;letter-spacing:0.286px;-webkit-text-stroke:0.2px #fff;">Introduction to Python</div>
<div class="t" style="top:104.01px;font-size:16px;line-height:22px;color:#fff;left:256.00px;letter-spacing:-0.215px;-webkit-text-stroke:0.35px #fff;">Schedule</div>
<div class="t" style="top:104.02px;font-size:15.6px;line-height:22px;color:#fff;left:801.30px;letter-spacing:-0.979px;-webkit-text-stroke:0.3px #fff;">HBC</div>
<div class="t" style="top:104.02px;font-size:15.6px;line-height:22px;color:#fff;left:850.50px;letter-spacing:0.326px;-webkit-text-stroke:0.3px #fff;">GitHub</div>
<div class="t" style="top:104.02px;font-size:15.6px;line-height:22px;color:#fff;left:919.80px;letter-spacing:0.145px;-webkit-text-stroke:0.3px #fff;">Contact us</div>
  <!-- mouse cursor -->
  <svg width="12" height="17.200" viewBox="0 0 14 20" style="left:752.3px;top:607.2px"><path d="M1 1v13.200l3.100-3 2.400 5.600 2.100-.9-2.400-5.500h4.400z" fill="#111" stroke="#fff" stroke-width=".9" stroke-linejoin="round"/></svg>
  <!-- bottom vignette -->
  <div class="a" style="left:0;top:688px;width:1073px;height:31px;background:linear-gradient(to bottom, rgba(130,130,130,0), rgba(130,130,130,0.10) 50%, rgba(120,120,120,0.34));"></div>
<div class="t" style="top:694.01px;font-size:19px;line-height:27px;color:#1d1d1d;left:778.50px;letter-spacing:-0.026px;">Harvard Chan Bioinformatics Core</div>
</div>


</body></html>
